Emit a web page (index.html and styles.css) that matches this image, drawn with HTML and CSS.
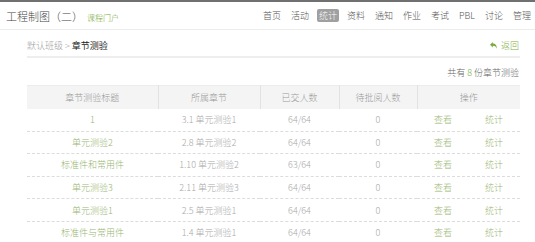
FILE: index.html
```html
<!DOCTYPE html>
<html lang="zh">
<head>
<meta charset="utf-8">
<title>章节测验</title>
<link rel="stylesheet" href="styles.css">
</head>
<body>
<header class="topbar">
  <div class="brand">
    <span class="course-title">工程制图（二）</span>
    <a class="portal">课程门户</a>
  </div>
  <nav class="nav">
    <a class="nav-item">首页</a>
    <a class="nav-item">活动</a>
    <a class="nav-item active">统计</a>
    <a class="nav-item">资料</a>
    <a class="nav-item">通知</a>
    <a class="nav-item">作业</a>
    <a class="nav-item">考试</a>
    <a class="nav-item">PBL</a>
    <a class="nav-item">讨论</a>
    <a class="nav-item">管理</a>
  </nav>
</header>
<main class="content">
  <div class="crumbbar">
    <div class="crumbs"><span class="crumb">默认班级</span> &gt; <span class="crumb-current">章节测验</span></div>
    <a class="back"><svg class="back-icon" viewBox="0 0 8 8" width="7" height="7"><path d="M0 3 L3.2 0 V1.8 C6 1.8 8 3.6 7.6 7.6 C6.8 5.2 5.4 4.4 3.2 4.4 V6.2 Z" fill="#7cad3c"/></svg>返回</a>
  </div>
  <div class="count">共有 <span class="count-num">8</span> 份章节测验</div>
  <table class="quiz-table">
    <colgroup>
      <col class="c1"><col class="c2"><col class="c3"><col class="c4"><col class="c5">
    </colgroup>
    <thead>
      <tr><th>章节测验标题</th><th>所属章节</th><th>已交人数</th><th>待批阅人数</th><th>操作</th></tr>
    </thead>
    <tbody>
      <tr><td><a class="link">1</a></td><td>3.1 单元测验1</td><td>64/64</td><td>0</td><td><div class="ops"><a class="link">查看</a><a class="link">统计</a></div></td></tr>
      <tr><td><a class="link">单元测验2</a></td><td>2.8 单元测验2</td><td>64/64</td><td>0</td><td><div class="ops"><a class="link">查看</a><a class="link">统计</a></div></td></tr>
      <tr><td><a class="link">标准件和常用件</a></td><td>1.10 单元测验2</td><td>63/64</td><td>0</td><td><div class="ops"><a class="link">查看</a><a class="link">统计</a></div></td></tr>
      <tr><td><a class="link">单元测验3</a></td><td>2.11 单元测验3</td><td>64/64</td><td>0</td><td><div class="ops"><a class="link">查看</a><a class="link">统计</a></div></td></tr>
      <tr><td><a class="link">单元测验1</a></td><td>2.5 单元测验1</td><td>64/64</td><td>0</td><td><div class="ops"><a class="link">查看</a><a class="link">统计</a></div></td></tr>
      <tr><td><a class="link">标准件与常用件</a></td><td>1.4 单元测验1</td><td>64/64</td><td>0</td><td><div class="ops"><a class="link">查看</a><a class="link">统计</a></div></td></tr>
    </tbody>
  </table>
</main>
</body>
</html>
```
FILE: styles.css
```css
* { box-sizing: border-box; }
html, body { margin: 0; padding: 0; background: #fff; }
body {
  font-family: "Noto Sans CJK SC", "Noto Sans", sans-serif;
  font-weight: 300;
  color: #666;
  border-top: 2px solid #707070;
  overflow: hidden;
}
a { text-decoration: none; cursor: pointer; }

.topbar {
  height: 28px;
  border-bottom: 1px solid #ececec;
  display: flex;
  align-items: center;
  justify-content: space-between;
  padding: 0 2px 0 6px;
}
.brand { display: flex; align-items: baseline; }
.course-title { font-size: 11px; color: #444; line-height: 14px; }
.portal { font-size: 8px; color: #72a632; margin-left: 4px; }

.nav { display: flex; align-items: center; gap: 6px; }
.nav-item {
  font-size: 9px;
  line-height: 13px;
  color: #555;
  padding: 0 2px;
  border-radius: 2px;
}
.nav-item.active { background: #a0a0a0; color: #fff; }

.content { margin: 0 15px 0 27px; }

.crumbbar {
  display: flex;
  justify-content: space-between;
  align-items: center;
  padding: 9px 1px 4px 0;
  border-bottom: 2px solid #eeeeee;
  font-size: 9px;
  line-height: 13px;
}
.crumbs { color: #a0a0a0; }
.crumb-current { color: #222; font-weight: 400; }
.back { color: #7cad3c; display: flex; align-items: center; gap: 4px; }
.back-icon { display: block; }

.count {
  text-align: right;
  font-size: 9px;
  line-height: 13px;
  color: #666;
  margin-top: 8px;
  padding-right: 1px;
}
.count-num { color: #7cad3c; }

.quiz-table {
  margin-top: 6px;
  width: 493px;
  border-collapse: collapse;
  table-layout: fixed;
  font-size: 9px;
}
.c1 { width: 131px; }
.c2 { width: 102px; }
.c3 { width: 79px; }
.c4 { width: 78px; }
.c5 { width: 103px; }

.quiz-table th {
  height: 23px;
  background: #f4f4f4;
  color: #999;
  font-weight: 300;
  text-align: center;
  border-top: 1px solid #ececec;
  border-right: 1px solid #e2e2e2;
  padding: 0;
}
.quiz-table th:last-child { border-right: none; }
.quiz-table td {
  height: 22.6px;
  text-align: center;
  color: #a8a8a8;
  border-bottom: 1px dashed #dcdcdc;
  padding: 0;
}
.link { color: #98b571; }
.ops { display: flex; justify-content: center; gap: 33px; }
```
